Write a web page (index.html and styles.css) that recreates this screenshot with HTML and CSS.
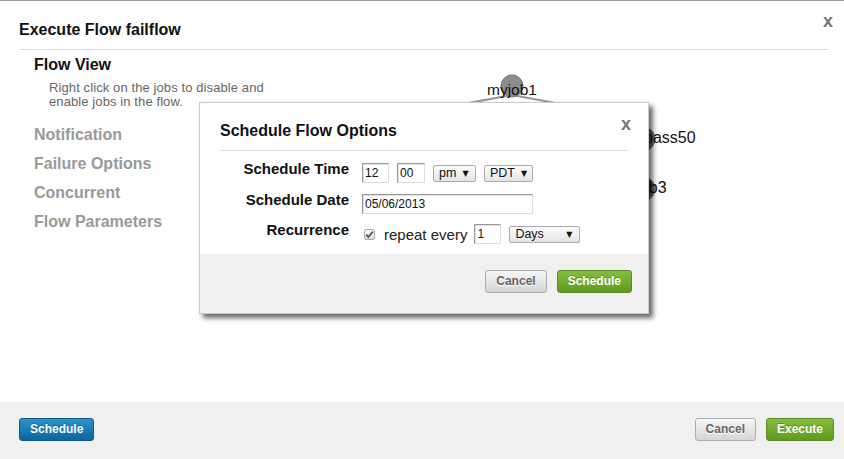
FILE: index.html
```html
<!DOCTYPE html>
<html>
<head>
<meta charset="utf-8">
<link rel="stylesheet" href="styles.css">
</head>
<body>
<div class="modal">
  <div class="modal-header">
    <h3 class="modal-title">Execute Flow failflow</h3>
  </div>
  <span class="close main-close">x</span>
  <div class="modal-body">
    <div class="sidebar">
      <div class="nav-head">Flow View</div>
      <p class="nav-desc">Right click on the jobs to disable and<br>enable jobs in the flow.</p>
      <ul class="nav-list">
        <li>Notification</li>
        <li>Failure Options</li>
        <li>Concurrent</li>
        <li>Flow Parameters</li>
      </ul>
    </div>
    <div class="graph">
      <svg class="graph-svg" width="544" height="352" viewBox="300 50 544 352">
        <line x1="512" y1="95" x2="420" y2="112" class="edge"/>
        <line x1="512" y1="95" x2="604" y2="112" class="edge"/>
        <line x1="604" y1="112" x2="643" y2="139" class="edge"/>
        <line x1="643" y1="139" x2="643" y2="189" class="edge"/>
        <circle cx="512" cy="86" r="11" class="node"/>
        <circle cx="643" cy="139" r="12" class="node dark"/>
        <circle cx="643" cy="189" r="12" class="node dark"/>
        <text x="487" y="95" class="label small">myjob1</text>
        <text x="644" y="143" class="label">pass50</text>
        <text x="615" y="193" class="label">myjob3</text>
      </svg>
    </div>
  </div>
  <div class="modal-footer">
    <button class="btn btn-blue">Schedule</button>
    <div class="btn-group">
      <button class="btn btn-gray">Cancel</button>
      <button class="btn btn-green">Execute</button>
    </div>
  </div>

  <div class="dialog">
    <div class="dialog-header">
      <h3 class="dialog-title">Schedule Flow Options</h3>
    </div>
    <span class="close dialog-close">x</span>
    <div class="form">
      <div class="form-label">Schedule Time</div>
      <div class="form-controls">
        <span class="input w27">12</span>
        <span class="input w28">00</span>
        <span class="select w43"><span>pm</span><span class="arrow">▼</span></span>
        <span class="select w49"><span>PDT</span><span class="arrow">▼</span></span>
      </div>
      <div class="form-label">Schedule Date</div>
      <div class="form-controls">
        <span class="input w171">05/06/2013</span>
      </div>
      <div class="form-label">Recurrence</div>
      <div class="form-controls">
        <span class="checkbox"><svg width="9" height="9" viewBox="0 0 9 9"><path d="M1.2 4.6 L3.4 7 L7.8 1.6" fill="none" stroke="#555" stroke-width="1.8"/></svg></span>
        <span class="repeat">repeat every</span>
        <span class="input w27 ml">1</span>
        <span class="select w71"><span>Days</span><span class="arrow">▼</span></span>
      </div>
    </div>
    <div class="dialog-footer">
      <button class="btn btn-gray">Cancel</button>
      <button class="btn btn-green">Schedule</button>
    </div>
  </div>
</div>
</body>
</html>
```
FILE: styles.css
```css
* { box-sizing: border-box; }
html, body { margin: 0; padding: 0; }
body {
  width: 844px;
  height: 459px;
  overflow: hidden;
  font-family: "Liberation Sans", Arial, sans-serif;
  color: #000;
  background: #fff;
}
.modal {
  position: relative;
  height: 459px;
  border-top: 1px solid #999;
  display: flex;
  flex-direction: column;
}
.modal-header {
  margin: 0 15px 0 19px;
  padding: 19px 0 9px 0;
  border-bottom: 1px solid #ddd;
}
.modal-title {
  margin: 0;
  font-size: 16px;
  line-height: 20px;
  font-weight: bold;
  color: #111;
}
.close {
  position: absolute;
  font-size: 18px;
  line-height: 18px;
  font-weight: bold;
  color: #777;
}
.main-close { right: 11px; top: 11px; }

.modal-body {
  flex: 1;
  display: flex;
  position: relative;
}
.sidebar {
  width: 300px;
  padding: 5px 0 0 34px;
}
.nav-head {
  font-size: 16px;
  line-height: 20px;
  font-weight: bold;
  color: #111;
}
.nav-desc {
  margin: 6px 0 0 15px;
  font-size: 13px;
  line-height: 14.4px;
  color: #666;
  letter-spacing: 0.1px;
}
.nav-list {
  list-style: none;
  margin: 10px 0 0 0;
  padding: 0;
}
.nav-list li {
  font-size: 16px;
  line-height: 29px;
  font-weight: bold;
  color: #999;
}
.graph {
  flex: 1;
  position: relative;
}
.graph-svg {
  position: absolute;
  left: 0;
  top: 0;
}
.edge { stroke: #999; stroke-width: 2; }
.node { fill: #8c8c8c; stroke: #777; stroke-width: 1; }
.node.dark { fill: #666; }
.label {
  font-family: "Liberation Sans", Arial, sans-serif;
  font-size: 16px;
  fill: #111;
}
.label.small { font-size: 15.5px; }

.modal-footer {
  height: 57px;
  background: #f0f0f0;
  padding: 16px 10px 0 19px;
  display: flex;
  justify-content: space-between;
  align-items: flex-start;
}
.btn-group { display: flex; gap: 10px; }
.btn {
  height: 23px;
  padding: 0 10px;
  font-family: "Liberation Sans", Arial, sans-serif;
  font-size: 12px;
  font-weight: bold;
  border-radius: 3px;
  border: 1px solid #aaa;
  line-height: 21px;
  margin: 0;
}
.btn-gray {
  color: #666;
  background: linear-gradient(#f7f7f7, #d6d6d6);
  border-color: #adadad;
  text-shadow: 0 1px 0 #fff;
}
.btn-green {
  color: #fff;
  background: linear-gradient(#86bf3e, #5e9a1e);
  border-color: #5a8c22;
  text-shadow: 0 -1px 0 rgba(0,0,0,0.25);
}
.btn-blue {
  color: #fff;
  background: linear-gradient(#2d93c9, #0b66a0);
  border-color: #0c5b8c;
  text-shadow: 0 -1px 0 rgba(0,0,0,0.25);
}

.dialog {
  position: absolute;
  left: 199px;
  top: 101px;
  width: 450px;
  height: 212px;
  background: #fff;
  border: 1px solid #ccc;
  box-shadow: 4px 4px 5px rgba(0,0,0,0.6);
  display: flex;
  flex-direction: column;
}
.dialog-header {
  margin: 0 20px;
  padding: 18px 0 9px 0;
  border-bottom: 1px solid #ddd;
}
.dialog-title {
  margin: 0;
  font-size: 16px;
  line-height: 20px;
  font-weight: bold;
  color: #111;
}
.dialog-close { right: 17px; top: 12px; }
.form {
  display: grid;
  grid-template-columns: 129px auto;
  column-gap: 13px;
  grid-auto-rows: 20px;
  row-gap: 10.5px;
  padding: 12px 20px 0 20px;
}
.form-label {
  text-align: right;
  font-size: 15px;
  line-height: 17px;
  font-weight: bold;
  color: #111;
  margin-top: -3px;
}
.form-controls {
  display: flex;
  align-items: center;
  gap: 8px;
}
.input {
  height: 20px;
  border: 1px solid #ddd;
  border-top-color: #999;
  border-left-color: #999;
  box-shadow: inset 1px 1px 0 #e2e2e2;
  font-size: 12px;
  line-height: 18px;
  padding-left: 2px;
  color: #111;
  background: #fff;
}
.w27 { width: 27px; }
.w28 { width: 28px; }
.w171 { width: 171px; }
.input.ml { margin-left: -1px; }
.select {
  height: 17px;
  display: flex;
  align-items: center;
  justify-content: space-between;
  gap: 6px;
  padding: 0 7px 0 5px;
  border: 1px solid #aaa;
  border-radius: 2px;
  background: linear-gradient(#fcfcfc, #e4e4e4);
  font-size: 12.5px;
  color: #111;
}
.select .arrow { font-size: 8px; font-family: "DejaVu Sans", sans-serif; }
.w43 { width: 43px; }
.w49 { width: 49px; }
.w71 { width: 71px; }
.checkbox {
  width: 11px;
  height: 11px;
  margin-left: 2px;
  border: 1px solid #aaa;
  border-radius: 2px;
  background: linear-gradient(#fafafa, #e0e0e0);
  display: flex;
  align-items: center;
  justify-content: center;
}
.repeat {
  font-size: 15px;
  color: #222;
  margin-left: 1px;
}
.dialog-footer {
  margin-top: auto;
  background: #f0f0f0;
  padding: 16px 16px 0 0;
  height: 59px;
  display: flex;
  justify-content: flex-end;
  align-items: flex-start;
  gap: 10px;
}
```
